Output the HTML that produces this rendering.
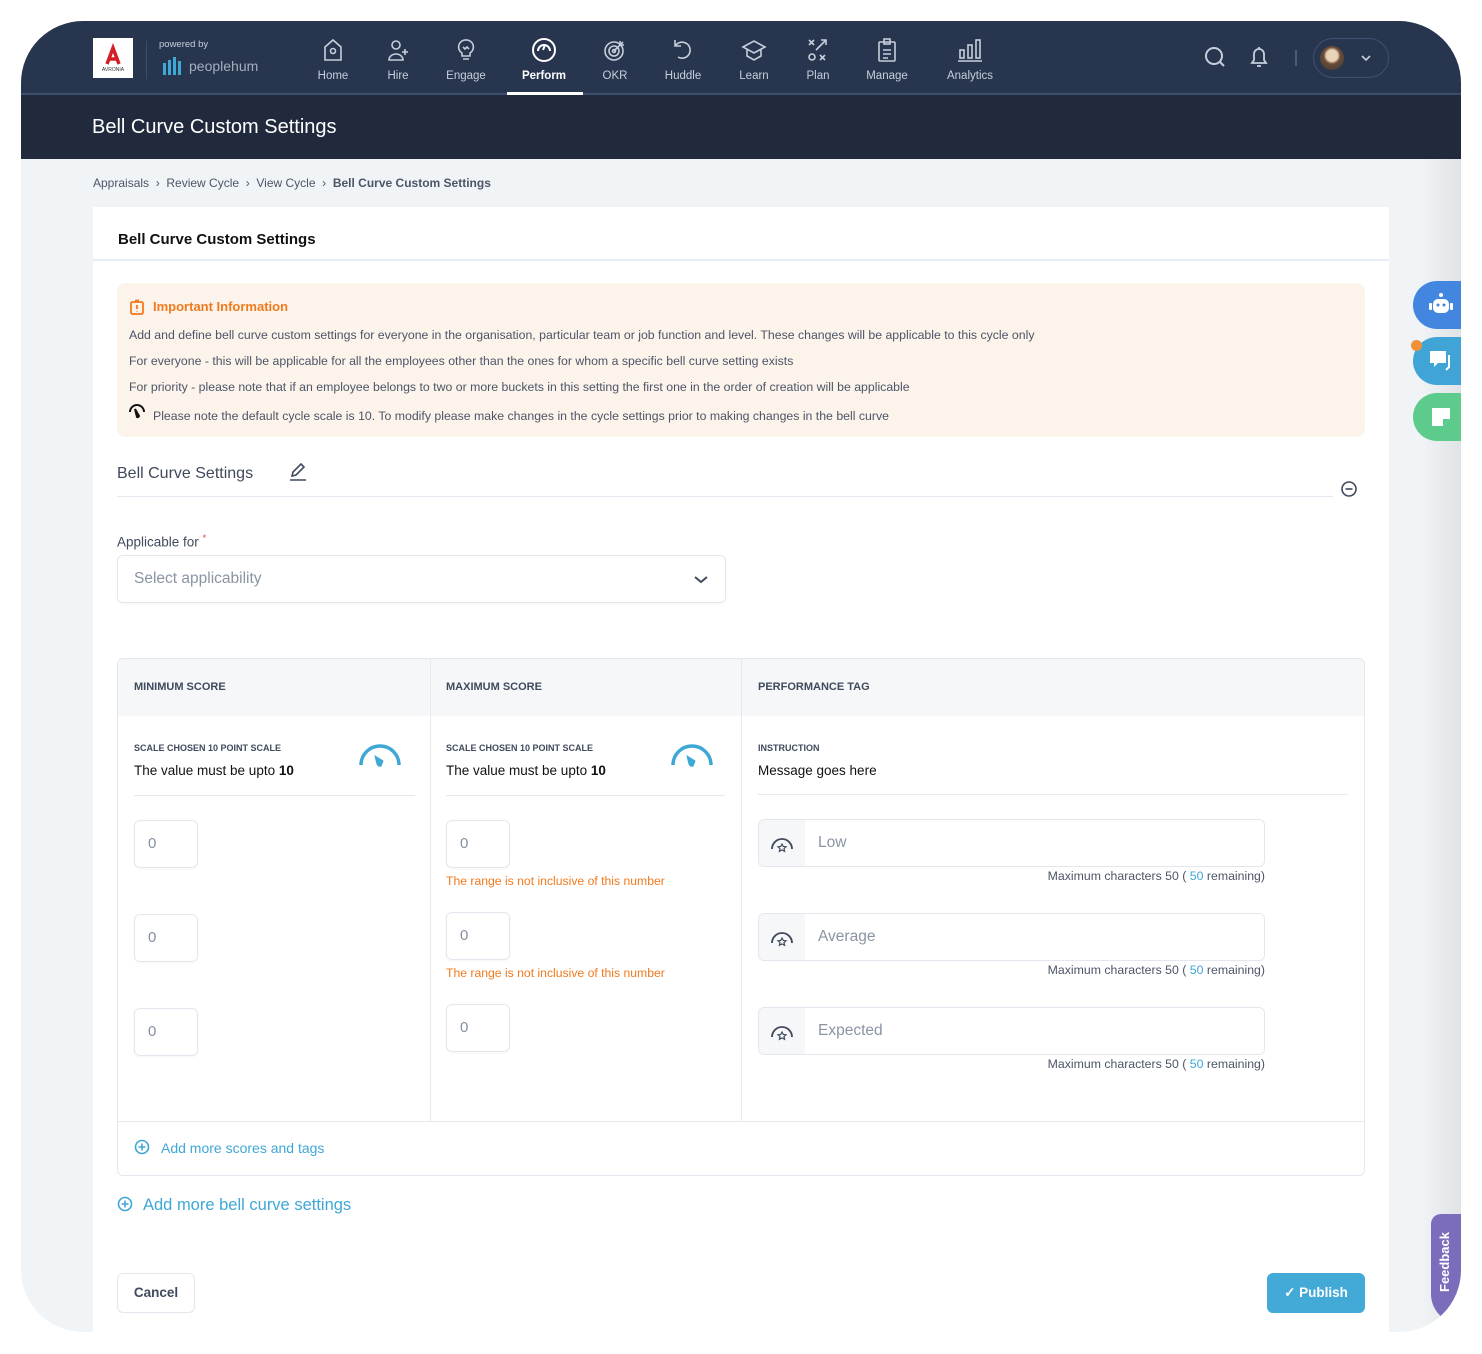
<!DOCTYPE html>
<html><head><meta charset="utf-8">
<style>
*{box-sizing:border-box;margin:0;padding:0}
body{width:1482px;height:1354px;background:#fff;font-family:"Liberation Sans",sans-serif;position:relative;overflow:hidden;color:#2b3445}
.app{position:absolute;left:21px;top:21px;width:1440px;height:1311px;border-radius:62px;background:#f0f4f7;overflow:hidden}
.nav{position:absolute;left:0;top:0;width:1440px;height:74px;background:#28354f;border-bottom:2px solid #3d4d6d}
.hdr{position:absolute;left:0;top:74px;width:1440px;height:64px;background:#212a3d}
.a{position:absolute}
.ni{position:absolute;top:16px;width:70px;text-align:center;color:#c6cedb;font-size:11.5px}
.ni svg{display:block;margin:0 auto 7px}
.card{position:absolute;left:72px;top:186px;width:1296px;height:1140px;background:#fff}
.info{position:absolute;left:24px;top:76px;width:1248px;height:154px;background:#fcf3eb;border-radius:8px}
.info p{position:absolute;left:12px;font-size:12.3px;color:#4c5567}
.tbl{position:absolute;left:24px;top:451px;width:1248px;height:518px;border:1px solid #e4e8ee;border-radius:6px;overflow:hidden}
.th{position:absolute;top:0;height:57px;background:#f6f7f9;font-size:11px;font-weight:bold;color:#3f4a5c;padding:22px 0 0 16px}
.vl{position:absolute;top:0;width:1px;height:463px;background:#e6eaf0}
.sm{font-size:9px;font-weight:bold;color:#3f4a5c}
.box{position:absolute;width:64px;height:48px;border:1px solid #e3e7ed;border-radius:6px;font-size:15px;color:#8590a0;padding:14px 0 0 13px;box-shadow:0 1px 2px rgba(0,0,0,.04)}
.err{position:absolute;font-size:12.2px;color:#f07a1e}
.tag{position:absolute;left:640px;width:507px;height:48px;border:1px solid #e3e7ed;border-radius:6px;overflow:hidden}
.tag .ic{position:absolute;left:0;top:0;width:46px;height:48px;background:#f6f7f9}
.tag span{position:absolute;left:59px;top:14px;font-size:15.5px;color:#8a94a3}
.mx{position:absolute;right:100px;font-size:12.3px;color:#4c5567;text-align:right}
.mx b{color:#3fa7d6;font-weight:normal}
</style></head><body>
<div class="app">
 <div class="nav">
  <div class="a" style="left:72px;top:17px;width:40px;height:40px;background:#fff"><svg width="40" height="40"><path d="M14 26 L20 10 L26 26 M16 21 h8" stroke="#d32027" stroke-width="3.5" fill="none"/><text x="20" y="33" font-size="5" text-anchor="middle" fill="#333" font-family="Liberation Sans">AVRONIA</text></svg></div>
  <div class="a" style="left:125px;top:20px;width:1px;height:38px;background:#3d4d6d"></div>
  <div class="a" style="left:138px;top:18px;font-size:9.5px;color:#c6cedb">powered by</div>
  <div class="a" style="left:142px;top:36px;width:20px;height:18px"><svg width="22" height="18"><g fill="#3fa7d6"><rect x="0" y="6" width="3" height="12"/><rect x="5" y="3" width="3" height="15"/><rect x="10" y="0" width="3" height="18"/><rect x="15" y="4" width="3" height="14"/></g></svg></div>
  <div class="a" style="left:168px;top:37px;font-size:14px;color:#a4aebd">peoplehum</div>
  <div class="ni" style="left:277px"><svg width="24" height="26" viewBox="0 0 24 26" fill="none" stroke="#c6cedb" stroke-width="1.6"><path d="M4 10 L12 3 L20 10 V23 H4 Z"/><circle cx="12" cy="14" r="2.5"/></svg>Home</div>
  <div class="ni" style="left:342px"><svg width="24" height="26" viewBox="0 0 24 26" fill="none" stroke="#c6cedb" stroke-width="1.6"><circle cx="10" cy="8" r="4"/><path d="M3 23 a7 6 0 0 1 14 0 Z"/><path d="M19 12 v6 M16 15 h6"/></svg>Hire</div>
  <div class="ni" style="left:410px"><svg width="24" height="26" viewBox="0 0 24 26" fill="none" stroke="#c6cedb" stroke-width="1.6"><path d="M12 3 a7 7 0 0 1 4 13 v3 h-8 v-3 a7 7 0 0 1 4-13Z M9 22 h6 M9 10 l2 2 l2-2 l2 2"/></svg>Engage</div>
  <div class="ni" style="left:488px;color:#fff;font-weight:bold"><svg width="26" height="26" viewBox="0 0 26 26" fill="none" stroke="#fff" stroke-width="2"><circle cx="13" cy="13" r="11"/><path d="M7 14 a6 6 0 0 1 12 0"/><path d="M12 13 l2-5"/></svg>Perform</div>
  <div class="ni" style="left:559px"><svg width="26" height="26" viewBox="0 0 26 26" fill="none" stroke="#c6cedb" stroke-width="1.6"><circle cx="12" cy="14" r="9"/><circle cx="12" cy="14" r="5"/><circle cx="12" cy="14" r="1.5"/><path d="M12 14 L21 5 M18 4 v4 h4"/></svg>OKR</div>
  <div class="ni" style="left:627px"><svg width="24" height="26" viewBox="0 0 24 26" fill="none" stroke="#c6cedb" stroke-width="1.6"><path d="M5 8 a8 8 0 1 1 2 12 M4 3 v6 h6"/></svg>Huddle</div>
  <div class="ni" style="left:698px"><svg width="26" height="26" viewBox="0 0 26 26" fill="none" stroke="#c6cedb" stroke-width="1.6"><path d="M2 10 L13 4 L24 10 L13 16 Z M6 12 v7 l7 4 l7-4 v-7"/></svg>Learn</div>
  <div class="ni" style="left:762px"><svg width="24" height="26" viewBox="0 0 24 26" fill="none" stroke="#c6cedb" stroke-width="1.6"><path d="M3 3 l5 5 M8 3 l-5 5 M14 18 l5 5 M19 18 l-5 5 M20 3 l-10 10 M15 3 h5 v5"/><circle cx="6" cy="20" r="3"/></svg>Plan</div>
  <div class="ni" style="left:831px"><svg width="24" height="26" viewBox="0 0 24 26" fill="none" stroke="#c6cedb" stroke-width="1.6"><rect x="4" y="5" width="16" height="19" rx="1"/><rect x="9" y="2" width="6" height="5"/><path d="M8 13 h8 M8 17 h8 M8 21 h5"/></svg>Manage</div>
  <div class="ni" style="left:914px"><svg width="28" height="26" viewBox="0 0 28 26" fill="none" stroke="#c6cedb" stroke-width="1.6"><rect x="4" y="13" width="4" height="8"/><rect x="12" y="8" width="4" height="13"/><rect x="20" y="3" width="4" height="18"/><path d="M2 24 h24"/></svg>Analytics</div>
  <div class="a" style="left:486px;top:71px;width:76px;height:3px;background:#fff"></div>
  <svg class="a" style="left:1182px;top:24px" width="24" height="24" fill="none" stroke="#c6cedb" stroke-width="2"><circle cx="11" cy="11" r="8"/><path d="M17 17 l4 4"/></svg>
  <svg class="a" style="left:1227px;top:24px" width="22" height="24" fill="none" stroke="#c6cedb" stroke-width="1.8"><path d="M4 18 h14 l-2-3 v-6 a5 5 0 0 0-10 0 v6 Z M9 21 h4 M11 2 v2"/></svg>
  <div class="a" style="left:1274px;top:29px;width:2px;height:16px;background:#4b5b7c"></div>
  <div class="a" style="left:1292px;top:17px;width:76px;height:40px;border:1.5px solid #3f5072;border-radius:20px"><div class="a" style="left:6px;top:7px;width:24px;height:24px;border-radius:50%;background:radial-gradient(circle at 50% 40%,#e9d4b8 0 30%,#6a4a35 45%,#3b3a3f)"></div><svg class="a" style="left:46px;top:14px" width="12" height="10" fill="none" stroke="#c6cedb" stroke-width="1.6"><path d="M2 3 l4 4 l4-4"/></svg></div>
 </div>
 <div class="hdr"><div class="a" style="left:71px;top:21px;font-size:20px;color:#fff">Bell Curve Custom Settings</div></div>
 <div class="a" style="left:72px;top:155px;font-size:12px;color:#4c5567">Appraisals &nbsp;›&nbsp; Review Cycle &nbsp;›&nbsp; View Cycle &nbsp;›&nbsp; <b>Bell Curve Custom Settings</b></div>
 <div class="a" style="left:1400px;top:138px;width:40px;height:1180px;background:linear-gradient(90deg,rgba(0,0,0,0),rgba(0,0,0,.07))"></div>
 <div class="card">
  <div class="a" style="left:25px;top:24px;font-size:15px;font-weight:bold;color:#111">Bell Curve Custom Settings</div>
  <div class="a" style="left:0;top:52px;width:1296px;height:2px;background:#e8edf3"></div>
  <div class="info">
   <svg class="a" style="left:12px;top:16px" width="16" height="16" fill="none" stroke="#f07a1e" stroke-width="1.8"><rect x="2" y="3" width="12" height="12" rx="1.5"/><path d="M6 1.5 h4 M8 6 v4 M8 12 v.5"/></svg>
   <div class="a" style="left:36px;top:16px;font-size:13px;font-weight:bold;color:#f07a1e">Important Information</div>
   <p style="top:45px">Add and define bell curve custom settings for everyone in the organisation, particular team or job function and level. These changes will be applicable to this cycle only</p>
   <p style="top:71px">For everyone - this will be applicable for all the employees other than the ones for whom a specific bell curve setting exists</p>
   <p style="top:97px">For priority - please note that if an employee belongs to two or more buckets in this setting the first one in the order of creation will be applicable</p>
   <svg class="a" style="left:11px;top:120px" width="18" height="16" fill="none" stroke="#111" stroke-width="2"><path d="M2 9 a7 7 0 0 1 14 0"/><path d="M7 6 l2 8 a1.5 1.5 0 0 0 2-1 Z"/></svg>
   <p style="top:126px;left:36px">Please note the default cycle scale is 10. To modify please make changes in the cycle settings prior to making changes in the bell curve</p>
  </div>
  <div class="a" style="left:24px;top:258px;font-size:16px;color:#3f4a5c">Bell Curve Settings</div>
  <svg class="a" style="left:196px;top:256px" width="18" height="18" fill="none" stroke="#3f4a5c" stroke-width="1.6"><path d="M3 13 l1-4 l8-8 l3 3 l-8 8 Z M1 17 h16"/></svg>
  <div class="a" style="left:24px;top:289px;width:1216px;height:1px;background:#e6eaf0"></div>
  <svg class="a" style="left:1247px;top:273px" width="18" height="18" fill="none" stroke="#3f4a5c" stroke-width="1.6"><circle cx="9" cy="9" r="7"/><path d="M5.5 9 h7"/></svg>
  <div class="a" style="left:24px;top:326px;font-size:13.5px;color:#3f4a5c">Applicable for <sup style="color:#e53935;font-size:9px">*</sup></div>
  <div class="a" style="left:24px;top:348px;width:609px;height:48px;border:1px solid #e3e7ed;border-radius:6px;box-shadow:0 1px 2px rgba(0,0,0,.05)"><div class="a" style="left:16px;top:14px;font-size:15.5px;color:#8a94a3">Select applicability</div><svg class="a" style="left:575px;top:18px" width="16" height="12" fill="none" stroke="#3f4a5c" stroke-width="2"><path d="M2 3 l6 5 l6-5"/></svg></div>
  <div class="tbl">
   <div class="th" style="left:0;width:312px">MINIMUM SCORE</div>
   <div class="th" style="left:312px;width:312px">MAXIMUM SCORE</div>
   <div class="th" style="left:624px;width:624px">PERFORMANCE TAG</div>
   <div class="vl" style="left:312px"></div><div class="vl" style="left:623px"></div>
   <div class="a sm" style="left:16px;top:84px">SCALE CHOSEN 10 POINT SCALE</div>
   <div class="a" style="left:16px;top:104px;font-size:13.5px;color:#111">The value must be upto <b>10</b></div>
   <svg class="a" style="left:240px;top:80px" width="44" height="32" fill="none" stroke="#3fa7d6" stroke-width="3.5"><path d="M3 26 a19 19 0 0 1 38 0"/><path d="M17 17 l8 5 l-2 5 a3 3 0 0 1-4-2 Z" fill="#3fa7d6" stroke-width="1"/></svg>
   <div class="a" style="left:16px;top:136px;width:281px;height:1px;background:#e6eaf0"></div>
   <div class="a sm" style="left:328px;top:84px">SCALE CHOSEN 10 POINT SCALE</div>
   <div class="a" style="left:328px;top:104px;font-size:13.5px;color:#111">The value must be upto <b>10</b></div>
   <svg class="a" style="left:552px;top:80px" width="44" height="32" fill="none" stroke="#3fa7d6" stroke-width="3.5"><path d="M3 26 a19 19 0 0 1 38 0"/><path d="M17 17 l8 5 l-2 5 a3 3 0 0 1-4-2 Z" fill="#3fa7d6" stroke-width="1"/></svg>
   <div class="a" style="left:328px;top:136px;width:279px;height:1px;background:#e6eaf0"></div>
   <div class="a sm" style="left:640px;top:84px">INSTRUCTION</div>
   <div class="a" style="left:640px;top:104px;font-size:13.5px;color:#111">Message goes here</div>
   <div class="a" style="left:640px;top:135px;width:590px;height:1px;background:#e6eaf0"></div>
   <div class="box" style="left:16px;top:161px">0</div>
   <div class="box" style="left:16px;top:255px">0</div>
   <div class="box" style="left:16px;top:349px">0</div>
   <div class="box" style="left:328px;top:161px">0</div>
   <div class="err" style="left:328px;top:215px">The range is not inclusive of this number</div>
   <div class="box" style="left:328px;top:253px">0</div>
   <div class="err" style="left:328px;top:307px">The range is not inclusive of this number</div>
   <div class="box" style="left:328px;top:345px">0</div>
   <div class="tag" style="top:160px"><div class="ic"><svg class="a" style="left:11px;top:15px" width="24" height="18" fill="none" stroke="#3f4a5c" stroke-width="1.8"><path d="M2 14 a10 10 0 0 1 20 0"/><path d="M12 9 l1.3 2.5 l2.7.3 l-2 1.8 l.6 2.7 l-2.6-1.4 l-2.6 1.4 l.6-2.7 l-2-1.8 l2.7-.3Z" stroke-width="1.2"/></svg></div><span>Low</span></div>
   <div class="mx" style="top:210px;right:99px">Maximum characters 50 ( <b>50</b> remaining)</div>
   <div class="tag" style="top:254px"><div class="ic"><svg class="a" style="left:11px;top:15px" width="24" height="18" fill="none" stroke="#3f4a5c" stroke-width="1.8"><path d="M2 14 a10 10 0 0 1 20 0"/><path d="M12 9 l1.3 2.5 l2.7.3 l-2 1.8 l.6 2.7 l-2.6-1.4 l-2.6 1.4 l.6-2.7 l-2-1.8 l2.7-.3Z" stroke-width="1.2"/></svg></div><span>Average</span></div>
   <div class="mx" style="top:304px;right:99px">Maximum characters 50 ( <b>50</b> remaining)</div>
   <div class="tag" style="top:348px"><div class="ic"><svg class="a" style="left:11px;top:15px" width="24" height="18" fill="none" stroke="#3f4a5c" stroke-width="1.8"><path d="M2 14 a10 10 0 0 1 20 0"/><path d="M12 9 l1.3 2.5 l2.7.3 l-2 1.8 l.6 2.7 l-2.6-1.4 l-2.6 1.4 l.6-2.7 l-2-1.8 l2.7-.3Z" stroke-width="1.2"/></svg></div><span>Expected</span></div>
   <div class="mx" style="top:398px;right:99px">Maximum characters 50 ( <b>50</b> remaining)</div>
   <div class="a" style="left:0;top:462px;width:1248px;height:1px;background:#e6eaf0"></div>
   <svg class="a" style="left:16px;top:480px" width="16" height="16" fill="none" stroke="#3fa7d6" stroke-width="1.6"><circle cx="8" cy="8" r="6.5"/><path d="M8 4.5 v7 M4.5 8 h7"/></svg>
   <div class="a" style="left:43px;top:481px;font-size:14px;color:#3fa7d6">Add more scores and tags</div>
  </div>
  <svg class="a" style="left:24px;top:989px" width="16" height="16" fill="none" stroke="#3fa7d6" stroke-width="1.6"><circle cx="8" cy="8" r="6.5"/><path d="M8 4.5 v7 M4.5 8 h7"/></svg>
  <div class="a" style="left:50px;top:989px;font-size:16.5px;color:#3fa7d6">Add more bell curve settings</div>
  <div class="a" style="left:24px;top:1066px;width:78px;height:40px;border:1.5px solid #e3e7ed;border-radius:6px;font-size:13.5px;font-weight:bold;color:#3f4a5c;text-align:center;line-height:37px">Cancel</div>
  <div class="a" style="left:1174px;top:1066px;width:98px;height:40px;background:#43a9d7;border-radius:6px;font-size:13.5px;font-weight:bold;color:#fff;text-align:center;line-height:40px">✓ Publish</div>
 </div>
 <div class="a" style="left:1392px;top:260px;width:60px;height:48px;border-radius:24px 0 0 24px;background:#4386e0"><svg class="a" style="left:14px;top:10px" width="28" height="28" fill="#fff"><circle cx="14" cy="4" r="2"/><rect x="6" y="8" width="16" height="14" rx="5"/><rect x="2" y="12" width="3" height="7" rx="1"/><rect x="23" y="12" width="3" height="7" rx="1"/><circle cx="11" cy="14" r="1.5" fill="#4386e0"/><circle cx="17" cy="14" r="1.5" fill="#4386e0"/></svg></div>
 <div class="a" style="left:1392px;top:316px;width:60px;height:48px;border-radius:24px 0 0 24px;background:#41a4d6"><svg class="a" style="left:15px;top:12px" width="28" height="26" fill="#fff"><path d="M2 2 h16 v12 h-8 l-4 4 v-4 h-4 Z"/><path d="M21 6 v12 l-3 3" stroke="#fff" stroke-width="2" fill="none"/></svg></div>
 <div class="a" style="left:1390px;top:319px;width:11px;height:11px;border-radius:50%;background:#f0913a"></div>
 <div class="a" style="left:1392px;top:372px;width:60px;height:48px;border-radius:24px 0 0 24px;background:#5ccb8c"><svg class="a" style="left:16px;top:12px" width="24" height="24"><path d="M3 3 h18 v11 l-7 7 h-11 Z" fill="#fff"/><path d="M14 21 v-7 h7" fill="#5ccb8c"/></svg></div>
 <div class="a" style="left:1410px;top:1193px;width:30px;height:110px;border-radius:10px 0 0 30px;background:#7b6dbb"><div class="a" style="left:4px;top:78px;transform:rotate(-90deg);transform-origin:0 0;font-size:13px;font-weight:bold;color:#fff;white-space:nowrap;line-height:20px">Feedback</div></div>
</div>
</body></html>
